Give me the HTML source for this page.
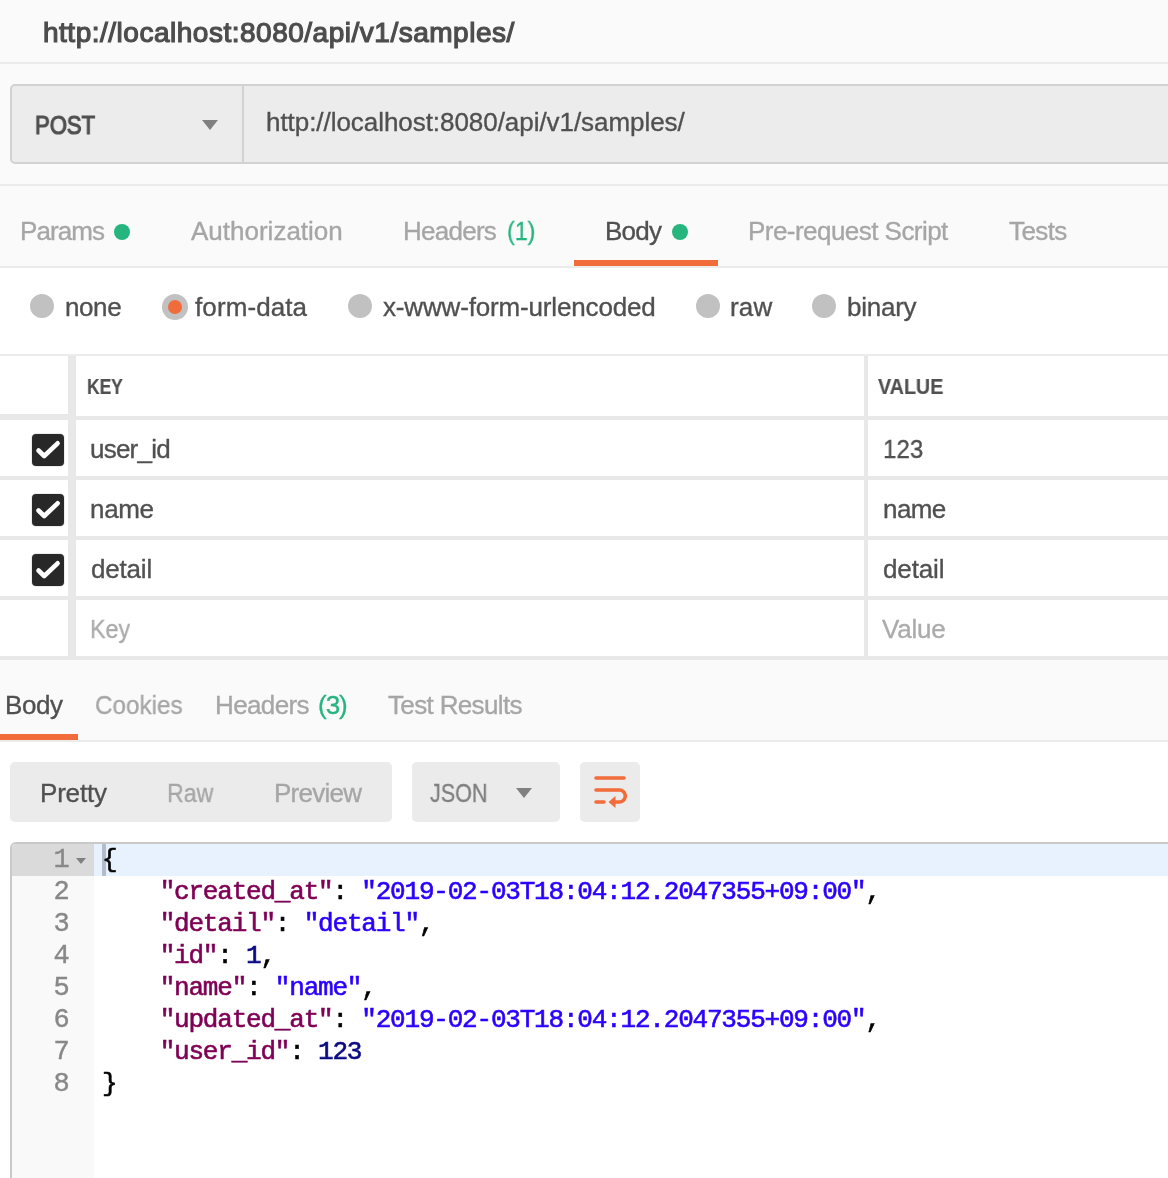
<!DOCTYPE html><html><head><meta charset="utf-8"><title>Postman</title><style>
html,body{margin:0;padding:0;width:1168px;height:1178px;overflow:hidden}
#w{width:1168px;height:1178px;overflow:hidden;position:relative;background:#fafafa;font-family:'Liberation Sans', sans-serif}
.a{position:absolute}
.t{will-change:transform;position:absolute;white-space:pre;line-height:1;transform-origin:0 0}
.ln{position:absolute;left:0;width:1168px;background:#ebebeb}
.rd{position:absolute;width:24px;height:24px;border-radius:50%;background:#c1c1c1;top:294px}
.cb{position:absolute;left:32px;width:32px;height:32px;border-radius:4px;background:#282828;box-shadow:0 0 0 1px #ececec}
.dot{position:absolute;width:16px;height:16px;border-radius:50%;background:#26b47f;top:224px}
.code{will-change:transform;position:absolute;left:102px;font:26px 'Liberation Mono', monospace;line-height:32px;letter-spacing:-1.2px;-webkit-text-stroke:0.6px;white-space:pre;color:#000}
.num{will-change:transform;position:absolute;left:12px;width:56px;text-align:right;font:27px 'Liberation Mono', monospace;line-height:32px;letter-spacing:-1.8px;-webkit-text-stroke:0.4px;color:#888}
.k{color:#7f0055}.s{color:#2a00ff}.n{color:#0a0a82}
</style></head><body><div id="w">
<div class="ln" style="top:62px;height:2px"></div>
<div class="a" style="left:10px;top:84px;width:1170px;height:76px;border:2px solid #d2d2d2;border-radius:5px;background:#ececec"></div>
<div class="a" style="left:242px;top:86px;width:2px;height:76px;background:#d2d2d2"></div>
<svg class="a" style="left:202px;top:120px" width="16" height="10"><path d="M0 0H16L8 10Z" fill="#808080"/></svg>
<div class="ln" style="top:184px;height:2px"></div>
<div class="a" style="left:0;top:268px;width:1168px;height:392px;background:#fff"></div>
<div class="ln" style="top:266px;height:2px"></div>
<div class="a" style="left:574px;top:260px;width:144px;height:6px;background:#f26b3a"></div>
<div class="dot" style="left:114px"></div><div class="dot" style="left:672px"></div>
<div class="rd" style="left:30px"></div>
<div class="rd" style="left:348px"></div>
<div class="rd" style="left:696px"></div>
<div class="rd" style="left:812px"></div>
<div class="a" style="left:162px;top:294px;width:26px;height:26px;border-radius:50%;background:#c1c1c1"></div>
<div class="a" style="left:168px;top:300px;width:14px;height:14px;border-radius:50%;background:#f26b3a"></div>
<div class="ln" style="top:354px;height:2px"></div>
<div class="ln" style="top:416px;height:4px;background:#e8e8e8"></div>
<div class="ln" style="top:476px;height:4px;background:#e8e8e8"></div>
<div class="ln" style="top:536px;height:4px;background:#e8e8e8"></div>
<div class="ln" style="top:596px;height:4px;background:#e8e8e8"></div>
<div class="ln" style="top:656px;height:4px;background:#e8e8e8"></div>
<div class="a" style="left:0;top:414px;width:72px;height:3px;background:#e8e8e8"></div>
<div class="a" style="left:68px;top:356px;width:8px;height:300px;background:#e8e8e8"></div>
<div class="a" style="left:864px;top:356px;width:4px;height:300px;background:#e8e8e8"></div>
<div class="cb" style="top:434px"><svg width="32" height="32"><path d="M6.5 16.5L12.2 22L25.6 9.3" fill="none" stroke="#fff" stroke-width="4.6" stroke-linecap="round" stroke-linejoin="round"/></svg></div>
<div class="cb" style="top:494px"><svg width="32" height="32"><path d="M6.5 16.5L12.2 22L25.6 9.3" fill="none" stroke="#fff" stroke-width="4.6" stroke-linecap="round" stroke-linejoin="round"/></svg></div>
<div class="cb" style="top:554px"><svg width="32" height="32"><path d="M6.5 16.5L12.2 22L25.6 9.3" fill="none" stroke="#fff" stroke-width="4.6" stroke-linecap="round" stroke-linejoin="round"/></svg></div>
<div class="a" style="left:0;top:742px;width:1168px;height:436px;background:#fff"></div>
<div class="ln" style="top:740px;height:2px"></div>
<div class="a" style="left:0;top:734px;width:78px;height:6px;background:#f26b3a"></div>
<div class="a" style="left:10px;top:762px;width:382px;height:60px;border-radius:5px;background:#ebebeb"></div>
<div class="a" style="left:412px;top:762px;width:148px;height:60px;border-radius:5px;background:#ebebeb"></div>
<div class="a" style="left:580px;top:762px;width:60px;height:60px;border-radius:5px;background:#ebebeb"></div>
<svg class="a" style="left:516px;top:788px" width="16" height="10"><path d="M0 0H16L8 10Z" fill="#808080"/></svg>
<svg class="a" style="left:580px;top:762px" width="60" height="60"><g fill="none" stroke="#f26b3a" stroke-width="3.6" stroke-linecap="round"><path d="M16 16H44"/><path d="M16 28H39.3a6 6 0 0 1 0 12H35"/><path d="M16 40H24"/></g><path d="M28.5 40L35.5 34V46Z" fill="#f26b3a"/></svg>
<div class="a" style="left:10px;top:842px;width:1170px;height:400px;border:2px solid #c9c9c9;border-radius:6px;background:#fff;box-sizing:border-box"></div>
<div class="a" style="left:12px;top:844px;width:82px;height:340px;background:#f9f9f9;border-top-left-radius:4px"></div>
<div class="a" style="left:12px;top:844px;width:82px;height:32px;background:#dadada;border-top-left-radius:4px"></div>
<div class="a" style="left:94px;top:844px;width:1080px;height:32px;background:#e8f2fe"></div>
<div class="a" style="left:102px;top:844px;width:4px;height:32px;background:#b3bccb"></div>
<svg class="a" style="left:76px;top:858px" width="10" height="6"><path d="M0 0H10L5 6Z" fill="#808080"/></svg>
<div class="num" style="top:844px">1</div>
<div class="code" style="top:844px">{</div>
<div class="num" style="top:876px">2</div>
<div class="code" style="top:876px">    <span class="k">"created_at"</span>: <span class="s">"2019-02-03T18:04:12.2047355+09:00"</span>,</div>
<div class="num" style="top:908px">3</div>
<div class="code" style="top:908px">    <span class="k">"detail"</span>: <span class="s">"detail"</span>,</div>
<div class="num" style="top:940px">4</div>
<div class="code" style="top:940px">    <span class="k">"id"</span>: <span class="n">1</span>,</div>
<div class="num" style="top:972px">5</div>
<div class="code" style="top:972px">    <span class="k">"name"</span>: <span class="s">"name"</span>,</div>
<div class="num" style="top:1004px">6</div>
<div class="code" style="top:1004px">    <span class="k">"updated_at"</span>: <span class="s">"2019-02-03T18:04:12.2047355+09:00"</span>,</div>
<div class="num" style="top:1036px">7</div>
<div class="code" style="top:1036px">    <span class="k">"user_id"</span>: <span class="n">123</span></div>
<div class="num" style="top:1068px">8</div>
<div class="code" style="top:1068px">}</div>
<span class="t" style="left:43.0px;top:19.0px;font-size:28px;color:#4d4d4d;-webkit-text-stroke:1.2px #4d4d4d;letter-spacing:0.51px">http://localhost:8080/api/v1/samples/</span>
<span class="t" style="left:35.0px;top:113.0px;font-size:25px;color:#505050;-webkit-text-stroke:1.2px #505050;transform:scaleX(0.8833)">POST</span>
<span class="t" style="left:266.0px;top:109.0px;font-size:26px;color:#505050;-webkit-text-stroke:0.35px #505050;letter-spacing:-0.05px">http://localhost:8080/api/v1/samples/</span>
<span class="t" style="left:20.0px;top:218.0px;font-size:26px;color:#a6a6a6;-webkit-text-stroke:0.35px #a6a6a6;letter-spacing:-0.94px">Params</span>
<span class="t" style="left:190.5px;top:218.0px;font-size:26px;color:#a6a6a6;-webkit-text-stroke:0.35px #a6a6a6">Authorization</span>
<span class="t" style="left:402.75px;top:218.0px;font-size:26px;color:#a6a6a6;-webkit-text-stroke:0.35px #a6a6a6;letter-spacing:-0.74px">Headers</span>
<span class="t" style="left:506.75px;top:218.0px;font-size:26px;color:#26b47f;-webkit-text-stroke:0.35px #26b47f;transform:scaleX(0.8946)">(1)</span>
<span class="t" style="left:604.75px;top:218.0px;font-size:26px;color:#505050;-webkit-text-stroke:0.35px #505050;letter-spacing:-0.73px">Body</span>
<span class="t" style="left:747.75px;top:218.0px;font-size:26px;color:#a6a6a6;-webkit-text-stroke:0.35px #a6a6a6;letter-spacing:-0.54px">Pre-request Script</span>
<span class="t" style="left:1008.75px;top:218.0px;font-size:26px;color:#a6a6a6;-webkit-text-stroke:0.35px #a6a6a6;letter-spacing:-0.61px">Tests</span>
<span class="t" style="left:64.5px;top:293.5px;font-size:26px;color:#505050;-webkit-text-stroke:0.35px #505050;letter-spacing:-0.4px">none</span>
<span class="t" style="left:195.25px;top:293.5px;font-size:26px;color:#505050;-webkit-text-stroke:0.35px #505050;letter-spacing:0.1px">form-data</span>
<span class="t" style="left:383.0px;top:293.5px;font-size:26px;color:#505050;-webkit-text-stroke:0.35px #505050;letter-spacing:-0.16px">x-www-form-urlencoded</span>
<span class="t" style="left:729.75px;top:293.5px;font-size:26px;color:#505050;-webkit-text-stroke:0.35px #505050;letter-spacing:0.15px">raw</span>
<span class="t" style="left:846.75px;top:293.5px;font-size:26px;color:#505050;-webkit-text-stroke:0.35px #505050;letter-spacing:-0.24px">binary</span>
<span class="t" style="left:87.0px;top:376.25px;font-size:22px;color:#505050;font-weight:bold;-webkit-text-stroke:0.2px #505050;transform:scaleX(0.7909)">KEY</span>
<span class="t" style="left:878.25px;top:376.25px;font-size:22px;color:#505050;font-weight:bold;-webkit-text-stroke:0.2px #505050;transform:scaleX(0.8965)">VALUE</span>
<span class="t" style="left:89.5px;top:435.5px;font-size:26px;color:#505050;-webkit-text-stroke:0.35px #505050;letter-spacing:-0.78px">user_id</span>
<span class="t" style="left:90.25px;top:495.75px;font-size:26px;color:#505050;-webkit-text-stroke:0.35px #505050;letter-spacing:-0.32px">name</span>
<span class="t" style="left:90.5px;top:555.5px;font-size:26px;color:#505050;-webkit-text-stroke:0.35px #505050;letter-spacing:-0.19px">detail</span>
<span class="t" style="left:90.25px;top:616.0px;font-size:26px;color:#ababab;-webkit-text-stroke:0.35px #ababab;transform:scaleX(0.8965)">Key</span>
<span class="t" style="left:882.75px;top:435.5px;font-size:26px;color:#505050;-webkit-text-stroke:0.35px #505050;transform:scaleX(0.9262)">123</span>
<span class="t" style="left:882.75px;top:495.75px;font-size:26px;color:#505050;-webkit-text-stroke:0.35px #505050;letter-spacing:-0.57px">name</span>
<span class="t" style="left:882.75px;top:555.5px;font-size:26px;color:#505050;-webkit-text-stroke:0.35px #505050;letter-spacing:-0.14px">detail</span>
<span class="t" style="left:882.0px;top:616.0px;font-size:26px;color:#ababab;-webkit-text-stroke:0.35px #ababab;letter-spacing:-0.24px">Value</span>
<span class="t" style="left:5.0px;top:691.75px;font-size:26px;color:#505050;-webkit-text-stroke:0.35px #505050;letter-spacing:-0.4px">Body</span>
<span class="t" style="left:94.55px;top:691.75px;font-size:26px;color:#a6a6a6;-webkit-text-stroke:0.35px #a6a6a6;transform:scaleX(0.9321)">Cookies</span>
<span class="t" style="left:215.0px;top:691.75px;font-size:26px;color:#a6a6a6;-webkit-text-stroke:0.35px #a6a6a6;letter-spacing:-0.62px">Headers</span>
<span class="t" style="left:317.7px;top:691.75px;font-size:26px;color:#26b47f;-webkit-text-stroke:0.35px #26b47f;letter-spacing:-1.0px">(3)</span>
<span class="t" style="left:387.9px;top:691.75px;font-size:26px;color:#a6a6a6;-webkit-text-stroke:0.35px #a6a6a6;letter-spacing:-0.65px">Test Results</span>
<span class="t" style="left:40.25px;top:779.75px;font-size:26px;color:#505050;-webkit-text-stroke:0.35px #505050;letter-spacing:-0.19px">Pretty</span>
<span class="t" style="left:167.0px;top:779.75px;font-size:26px;color:#a6a6a6;-webkit-text-stroke:0.35px #a6a6a6;transform:scaleX(0.891)">Raw</span>
<span class="t" style="left:274.4px;top:779.75px;font-size:26px;color:#a6a6a6;-webkit-text-stroke:0.35px #a6a6a6;letter-spacing:-0.73px">Preview</span>
<span class="t" style="left:430.1px;top:779.75px;font-size:26px;color:#808080;-webkit-text-stroke:0.35px #808080;transform:scaleX(0.8299)">JSON</span>
</div></body></html>
